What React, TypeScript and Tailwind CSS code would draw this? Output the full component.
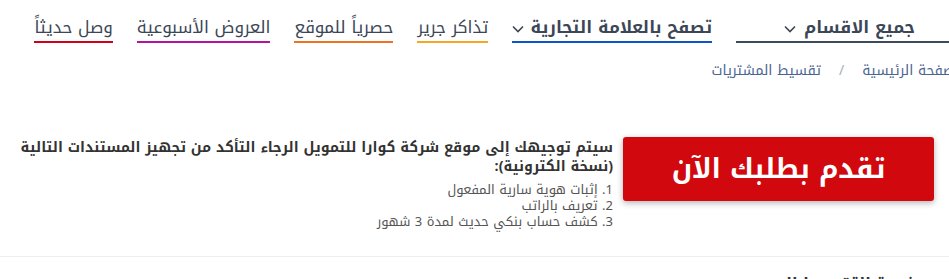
import React from 'react';

const navItems = [
  { label: 'تصفح بالعلامة التجارية', border: 'border-[#0b55c6]', bold: true, chevron: true },
  { label: 'تذاكر جرير', border: 'border-[#f5a623]', bold: false, chevron: false },
  { label: 'حصرياً للموقع', border: 'border-[#ed7422]', bold: false, chevron: false },
  { label: 'العروض الأسبوعية', border: 'border-[#b3139f]', bold: false, chevron: false },
  { label: 'وصل حديثاً', border: 'border-[#d0021b]', bold: false, chevron: false },
];

function Chevron() {
  return (
    <svg width="12" height="8" viewBox="0 0 12 8" className="mt-1 shrink-0">
      <path d="M1 1.5 L6 6.5 L11 1.5" fill="none" stroke="currentColor" strokeWidth="1.6" />
    </svg>
  );
}

export default function App() {
  return (
    <div
      dir="rtl"
      className="w-[949px] h-[279px] overflow-hidden bg-white text-[#3b4656] font-['Noto_Kufi_Arabic','DejaVu_Sans',sans-serif]"
    >
      <div className="-mr-[14px]">
        {/* Nav */}
        <nav className="flex items-end gap-6 pt-[14px]">
          <div className="w-[227px] flex items-center justify-center gap-2 border-b-2 border-[#3d4a5e] pb-px">
            <span className="text-[17px] font-bold leading-[26px]">جميع الاقسام</span>
            <Chevron />
          </div>
          {navItems.map(item => (
            <div key={item.label} className={`flex items-center gap-[6px] border-b-2 ${item.border} pb-px`}>
              <span className={`text-[17px] leading-[26px] whitespace-nowrap ${item.bold ? 'font-bold' : 'font-normal'}`}>{item.label}</span>
              {item.chevron && <Chevron />}
            </div>
          ))}
        </nav>

        {/* Breadcrumb */}
        <div className="flex items-center gap-[18px] text-[14px] text-[#4a6491] mt-[17px] leading-[22px]">
          <span>الصفحة الرئيسية</span>
          <span className="text-[#a3adbd]">/</span>
          <span>تقسيط المشتريات</span>
        </div>

        {/* Main */}
        <div className="flex items-start gap-[10px] pr-[29px] mt-[55px]">
          <button className="w-[311px] h-[64px] shrink-0 rounded-[3px] bg-[#d2080f] text-white text-[27px] font-bold leading-[40px] shadow-[0_2px_6px_rgba(0,0,0,0.3)]">
            تقدم بطلبك الآن
          </button>
          <div className="pt-[1px]">
            <p className="text-[14.2px] font-bold text-[#333] leading-[19px]">
              سيتم توجيهك إلى موقع شركة كوارا للتمويل الرجاء التأكد من تجهيز المستندات التالية
              <br />
              (نسخة الكترونية):
            </p>
            <ol className="mt-[6px] text-[13px] text-[#555] leading-[16px]">
              <li>1. إثبات هوية سارية المفعول</li>
              <li>2. تعريف بالراتب</li>
              <li>3. كشف حساب بنكي حديث لمدة 3 شهور</li>
            </ol>
          </div>
        </div>

        <div className="mt-[26px] border-t border-[#eeeeee]" />
        <div className="pr-[46px] pt-[15px] text-[16px] font-bold leading-[24px] text-[#333]">خدمة التقسيط الميسر</div>
      </div>
    </div>
  );
}
